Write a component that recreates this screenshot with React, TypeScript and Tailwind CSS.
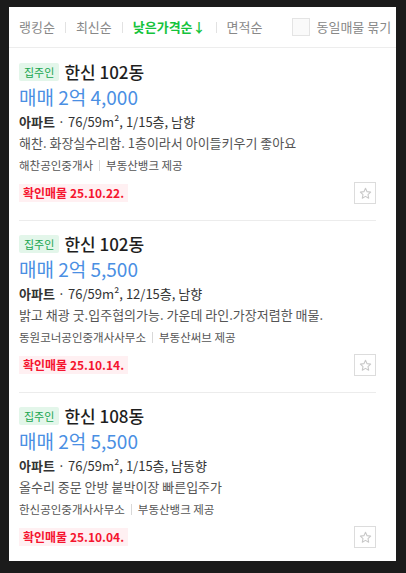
import React from "react";

interface Listing {
  title: string;
  price: string;
  spec: string;
  desc: string;
  agency: string;
  provider: string;
  confirmed: string;
}

const listings: Listing[] = [
  {
    title: "한신 102동",
    price: "매매 2억 4,000",
    spec: "76/59m², 1/15층, 남향",
    desc: "해찬. 화장실수리함. 1층이라서 아이들키우기 좋아요",
    agency: "해찬공인중개사",
    provider: "부동산뱅크 제공",
    confirmed: "25.10.22.",
  },
  {
    title: "한신 102동",
    price: "매매 2억 5,500",
    spec: "76/59m², 12/15층, 남향",
    desc: "밝고 채광 굿.입주협의가능. 가운데 라인.가장저렴한 매물.",
    agency: "동원코너공인중개사사무소",
    provider: "부동산써브 제공",
    confirmed: "25.10.14.",
  },
  {
    title: "한신 108동",
    price: "매매 2억 5,500",
    spec: "76/59m², 1/15층, 남동향",
    desc: "올수리 중문 안방 붙박이장 빠른입주가",
    agency: "한신공인중개사사무소",
    provider: "부동산뱅크 제공",
    confirmed: "25.10.04.",
  },
];

const font = { fontFamily: '"Noto Sans CJK KR", "Noto Sans", sans-serif' };

const tabs = ["랭킹순", "최신순", "낮은가격순↓", "면적순"];

function StarButton() {
  return (
    <button className="w-[22px] h-[22px] border border-[#dcdcdc] bg-white flex items-center justify-center">
      <svg width="13" height="13" viewBox="0 0 24 24" fill="none" stroke="#c8c8c8" strokeWidth="2" strokeLinejoin="round">
        <path d="M12 2.5l2.9 6.1 6.6.8-4.9 4.6 1.3 6.6L12 17.3l-5.9 3.3 1.3-6.6-4.9-4.6 6.6-.8z" />
      </svg>
    </button>
  );
}

function ListingCard({ item, first }: { item: Listing; first: boolean }) {
  return (
    <div className={`${first ? "pt-[15px]" : "pt-[14px] border-t border-[#ececec]"} pb-[16px]`}>
      <div className="flex items-center h-[18px]">
        <span className="h-[18px] px-[5px] bg-[#e3f6ea] text-[#17a54e] text-[11px] leading-[18px] rounded-[2px]">
          집주인
        </span>
        <span className="ml-[5px] text-[17px] leading-[18px] font-medium text-[#1e1e1e]">{item.title}</span>
      </div>
      <div className="mt-[4px] text-[19px] leading-[24px] text-[#4a8fe3]">{item.price}</div>
      <div className="mt-[3px] text-[13px] leading-[20px] text-[#333]">
        <span className="font-bold">아파트</span>
        <span> · {item.spec}</span>
      </div>
      <div className="mt-[1px] text-[13px] leading-[20px] text-[#555]">{item.desc}</div>
      <div className="mt-[4px] flex items-center text-[11.5px] leading-[16px] text-[#555]">
        <span>{item.agency}</span>
        <span className="mx-[6px] w-px h-[11px] bg-[#d8d8d8]" />
        <span>{item.provider}</span>
      </div>
      <div className="mt-[9px] flex items-center justify-between">
        <span className="h-[18px] px-[4px] bg-[#fff0f2] text-[#f5142f] text-[12px] leading-[18px] font-bold">
          확인매물 {item.confirmed}
        </span>
        <StarButton />
      </div>
    </div>
  );
}

export default function App() {
  return (
    <div className="w-[406px] h-[573px] bg-[#1b1b1b] pl-[9px] pt-[7px] pr-[10px] pb-[12px]" style={font}>
      <div className="w-full h-full bg-white overflow-hidden flex flex-col">
        <div className="h-[41px] shrink-0 border-b border-[#ededed] flex items-center pl-[10px] text-[13px] text-[#888]">
          {tabs.map((t, i) => (
            <React.Fragment key={t}>
              {i > 0 && <span className="mx-[10px] w-px h-[11px] bg-[#e2e2e2]" />}
              <span className={i === 2 ? "text-[#14c33c] font-bold" : ""}>{t}</span>
            </React.Fragment>
          ))}
          <span className="ml-[30px] shrink-0 w-[18px] h-[18px] border border-[#e4e4e4] bg-[#fafafa]" />
          <span className="ml-[6px] whitespace-nowrap">동일매물 묶기</span>
        </div>
        <div className="pl-[10px] pr-[20px]">
          {listings.map((item, i) => (
            <ListingCard key={i} item={item} first={i === 0} />
          ))}
        </div>
      </div>
    </div>
  );
}
